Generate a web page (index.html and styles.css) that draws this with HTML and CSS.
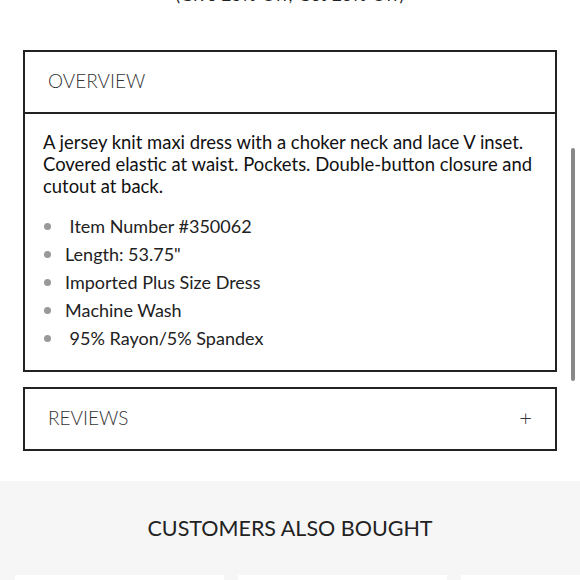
FILE: index.html
```html
<!DOCTYPE html>
<html lang="en">
<head>
  <meta charset="UTF-8" />
  <meta name="viewport" content="width=device-width, initial-scale=1.0"/>
  <title>Product Details</title>
  <link rel="stylesheet" href="styles.css">
</head>
<body>

<!-- Promo line (scrolled mostly out of view) -->
<div class="promo">(Give 25% Off, Get 25% Off)</div>

<!-- Overview -->
<div class="panel">
  <div class="panel-head">OVERVIEW</div>
  <div class="panel-body">
    <p class="desc">A jersey knit maxi dress with a choker neck and lace V inset. Covered elastic at waist. Pockets. Double-button closure and cutout at back.</p>
    <ul class="specs">
      <li>&nbsp;Item Number #350062</li>
      <li>Length: 53.75"</li>
      <li>Imported Plus Size Dress</li>
      <li>Machine Wash</li>
      <li>&nbsp;95% Rayon/5% Spandex</li>
    </ul>
  </div>
</div>

<!-- Reviews -->
<div class="panel reviews">
  <div class="panel-head">
    <span>REVIEWS</span>
    <span class="toggle">+</span>
  </div>
</div>

<!-- Recommendations -->
<div class="also-bought">
  <h2>CUSTOMERS ALSO BOUGHT</h2>
  <div class="cards">
    <div class="card"></div>
    <div class="card"></div>
    <div class="card"></div>
  </div>
</div>

<div class="scrollbar"></div>

</body>
</html>
```

FILE: styles.css
```css
* { box-sizing: border-box; margin: 0; padding: 0; }
html, body { height: 100%; overflow: hidden; }
body { font-family: 'Lato', sans-serif; background: #fff; color: #222; }

.promo { text-align: center; font-size: 17px; line-height: 20px; margin-top: -15px; color: #222; letter-spacing: 0.6px; }

.panel { border: 2px solid #222; margin: 45px 23px 0; }
.panel-head { height: 62px; display: flex; align-items: center; justify-content: space-between; padding: 0 23px 4px; font-size: 19px; font-weight: 300; color: #333; border-bottom: 2px solid #222; }
.panel-body { padding: 17px 12px 18px 18px; }
.desc { font-size: 18.45px; line-height: 22px; color: #111; }
.specs { list-style: none; margin-top: 15px; }
.specs li { position: relative; padding-left: 22px; font-size: 18px; line-height: 28px; color: #222; }
.specs li::before { content: ""; position: absolute; left: 1px; top: 11px; width: 7px; height: 7px; border-radius: 50%; background: #999; }

.reviews { margin-top: 15px; }
.reviews .panel-head { border-bottom: none; height: 60px; }
.toggle { font-size: 22px; font-weight: 300; color: #333; margin-right: 0; }

.also-bought { background: #f6f6f6; margin-top: 30px; padding: 30px 15px 0; }
.also-bought h2 { text-align: center; font-size: 21.5px; font-weight: 400; color: #222; line-height: 34px; }
.cards { display: flex; gap: 14px; margin-top: 30px; }
.card { flex: 0 0 209px; height: 200px; background: #fff; }

.scrollbar { position: fixed; right: 5px; top: 148px; width: 4px; height: 233px; border-radius: 2px; background: #888; }
```
